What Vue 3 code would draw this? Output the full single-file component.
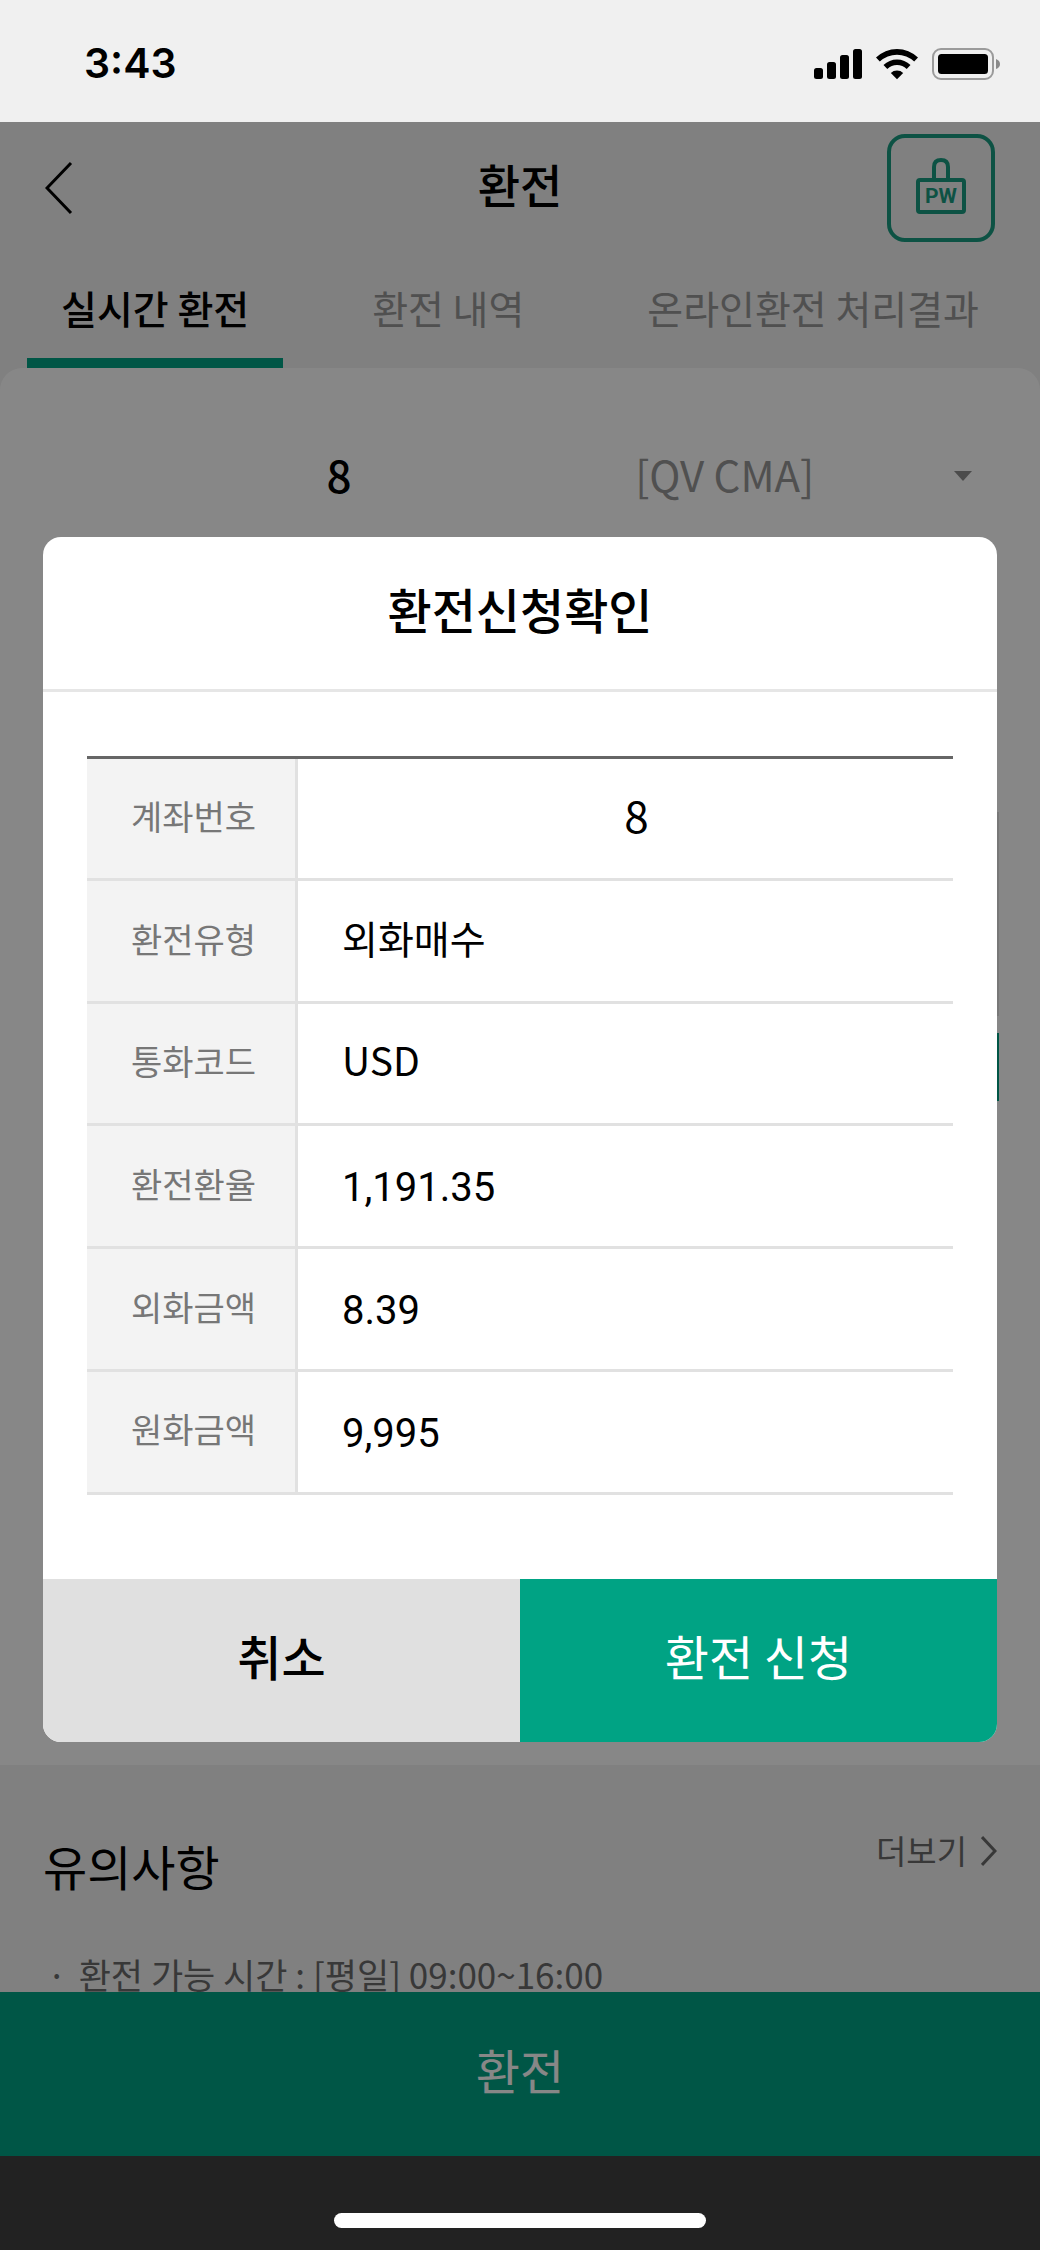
<script setup>
const tabs = ['실시간 환전', '환전 내역', '온라인환전 처리결과']
const rows = [
  { label: '계좌번호', value: '8', kind: 'account-value' },
  { label: '환전유형', value: '외화매수', kind: 'type' },
  { label: '통화코드', value: 'USD', kind: 'code' },
  { label: '환전환율', value: '1,191.35', kind: 'number' },
  { label: '외화금액', value: '8.39', kind: 'number' },
  { label: '원화금액', value: '9,995', kind: 'number' },
]
</script>

<template>
  <div class="phone">
    <div class="status">
      <span class="time">3:43</span>
      <div class="status-icons">
        <svg width="48" height="32" viewBox="0 0 48 32" aria-hidden="true">
          <rect x="0" y="20" width="9" height="11" rx="2.5" />
          <rect x="13" y="14" width="9" height="17" rx="2.5" />
          <rect x="26" y="7" width="9" height="24" rx="2.5" />
          <rect x="39" y="1" width="9" height="30" rx="2.5" />
        </svg>
        <svg width="42" height="32" viewBox="0 0 42 32" aria-hidden="true">
          <path d="M0 9.500a30 30 0 0 1 42 0l-3.800 4a25 25 0 0 0-34.400 0z" />
          <path d="M7.500 17a19.500 19.500 0 0 1 27 0l-3.800 4a14 14 0 0 0-19.400 0z" />
          <path d="M14.800 25a9 9 0 0 1 12.400 0L21 31.200z" />
        </svg>
        <svg width="68" height="32" viewBox="0 0 68 32" aria-hidden="true">
          <rect x="1" y="1" width="60" height="30" rx="8" fill="none" stroke="#9b9b9b" stroke-width="2" />
          <rect x="6" y="6" width="50" height="20" rx="3.500" />
          <path d="M64 11q4 1.500 4 5t-4 5z" fill="#8a8a8a" />
        </svg>
      </div>
    </div>

    <div class="screen">
      <div class="content">
        <header class="top">
          <button class="back" type="button" aria-label="뒤로">
            <svg width="28" height="54" viewBox="0 0 28 54" aria-hidden="true">
              <path d="M26 2L2 27l24 25" fill="none" stroke="#000" stroke-width="3" />
            </svg>
          </button>
          <h1>환전</h1>
          <button class="pw" type="button">
            <svg class="shackle" width="18" height="20" viewBox="0 0 18 20" aria-hidden="true">
              <path d="M2 20V9q0-7 7-7t7 7v11" />
            </svg>
            <span class="pw-text">PW</span>
          </button>
        </header>

        <nav class="tabs">
          <a v-for="(tab, i) in tabs" :key="tab" href="#" :class="{ active: i === 0 }">{{ tab }}</a>
        </nav>

        <section class="sheet">
          <button class="account" type="button" aria-haspopup="listbox">
            <span class="account-no">8</span>
            <span class="account-type">[QV CMA]</span>
            <svg width="18" height="10" viewBox="0 0 18 10" aria-hidden="true">
              <path d="M0 0h18L9 10z" fill="#8f8f8f" />
            </svg>
          </button>
          <div class="panel"></div>
          <div class="accent"></div>
        </section>

        <section class="notice">
          <div class="notice-head">
            <h2>유의사항</h2>
            <a href="#" class="more">
              더보기
              <svg width="16" height="32" viewBox="0 0 16 32" aria-hidden="true">
                <path d="M1 2l13 14L1 30" fill="none" stroke="#6b6b6b" stroke-width="3" />
              </svg>
            </a>
          </div>
          <ul>
            <li><span>·</span>환전 가능 시간 : [평일] 09:00~16:00</li>
          </ul>
        </section>
      </div>

      <button class="submit" type="button">환전</button>

      <div class="overlay">
        <div class="dialog" role="dialog" aria-modal="true" aria-labelledby="dialog-title">
          <h2 id="dialog-title">환전신청확인</h2>
          <div class="dialog-body">
            <table>
              <tbody>
                <tr v-for="row in rows" :key="row.label">
                  <th scope="row">{{ row.label }}</th>
                  <td :class="row.kind">{{ row.value }}</td>
                </tr>
              </tbody>
            </table>
          </div>
          <div class="actions">
            <button type="button" class="cancel">취소</button>
            <button type="button" class="confirm">환전 신청</button>
          </div>
        </div>
      </div>
    </div>

    <div class="home"><span></span></div>
  </div>
</template>

<style>
body {
  margin: 0;
}
</style>

<style scoped>
* {
  box-sizing: border-box;
}
.phone {
  display: flex;
  flex-direction: column;
  height: 100vh;
  font-family: "Noto Sans CJK KR", sans-serif;
  font-size: 39px;
  line-height: 1.2;
  color: #000;
}
button {
  margin: 0;
  padding: 0;
  border: 0;
  background: none;
  font: inherit;
  color: inherit;
}
a {
  color: inherit;
  text-decoration: none;
}
h1,
h2,
ul {
  margin: 0;
  padding: 0;
  font-weight: 400;
  list-style: none;
}
.status {
  display: flex;
  align-items: center;
  justify-content: space-between;
  height: 122px;
  padding: 6px 40px 0 84px;
  background: #f0f0f0;
}
.time {
  font-family: Inter, sans-serif;
  font-size: 41px;
  font-weight: 600;
}
.status-icons {
  display: flex;
  gap: 14px;
}
.screen {
  position: relative;
  display: flex;
  flex: 1;
  flex-direction: column;
  min-height: 0;
  background: #f1f1f1;
}
.content {
  flex: 1;
  min-height: 0;
  overflow: hidden;
}
.top {
  display: grid;
  grid-template-columns: 108px 1fr 108px;
  align-items: center;
  height: 130px;
  padding: 2px 45px 0;
}
.back {
  display: flex;
  justify-self: start;
}
h1 {
  padding-bottom: 8px;
  font-size: 46px;
  font-weight: 500;
  text-align: center;
}
.pw {
  display: flex;
  flex-direction: column;
  align-items: center;
  justify-content: center;
  width: 108px;
  height: 108px;
  padding-bottom: 4px;
  border: 4px solid #1a9c81;
  border-radius: 18px;
  color: #1a9c81;
}
.shackle {
  fill: none;
  stroke: #1a9c81;
  stroke-width: 4;
}
.pw-text {
  width: 50px;
  height: 36px;
  border: 4px solid #1a9c81;
  border-radius: 4px;
  font: 700 21px/28px Roboto, sans-serif;
}
.tabs {
  display: flex;
  justify-content: space-between;
  height: 116px;
  padding: 0 27px;
  color: #979797;
}
.tabs a {
  display: flex;
  align-items: center;
  padding: 4px 34px 0;
  border-bottom: 10px solid transparent;
}
.tabs .active {
  border-color: #00a384;
  color: #000;
  font-weight: 500;
}
.sheet {
  padding: 68px 41px 664px 43px;
  border-radius: 22px 22px 0 0;
  background: #fff;
}
.account {
  display: grid;
  grid-template-columns: 13fr 7fr auto;
  align-items: center;
  width: 100%;
  height: 80px;
  padding-right: 27px;
  text-align: left;
}
.account-no,
.account-type {
  padding-bottom: 4px;
}
.account-no {
  font-size: 44px;
  font-weight: 500;
  text-align: center;
}
.account-type {
  font-size: 42px;
  color: #979797;
}
.panel {
  height: 204px;
  margin-top: 296px;
  border: 2px solid #e3e3e3;
}
.accent {
  height: 68px;
  margin-top: 17px;
  background: #00a384;
}
.notice {
  padding: 60px 43px 0;
}
.notice-head {
  display: flex;
  justify-content: space-between;
  height: 108px;
}
.notice h2 {
  padding-top: 12px;
  font-size: 48px;
}
.more {
  display: flex;
  align-items: center;
  gap: 14px;
  height: 52px;
  font-size: 33px;
  color: #6b6b6b;
}
.notice li {
  display: flex;
  gap: 12px;
  padding: 20px 4px;
  font-size: 35px;
  color: #6b6b6b;
}
.submit {
  height: 164px;
  padding-bottom: 8px;
  background: #00a384;
  font-size: 48px;
  color: #fff;
}
.overlay {
  position: absolute;
  inset: 0;
  display: flex;
  align-items: center;
  padding: 0 43px;
  background: rgba(0, 0, 0, 0.47);
}
.dialog {
  flex: 1;
  overflow: hidden;
  border-radius: 18px;
  background: #fff;
}
.dialog h2 {
  display: flex;
  align-items: center;
  justify-content: center;
  height: 155px;
  padding-bottom: 8px;
  border-bottom: 3px solid #e6e6e6;
  font-size: 48px;
  font-weight: 500;
}
.dialog-body {
  padding: 64px 44px 84px;
}
table {
  width: 100%;
  height: 739px;
  border-top: 3px solid #666;
  border-spacing: 0;
}
tr {
  height: 122px;
}
th,
td {
  border-bottom: 3px solid #e1e1e1;
  text-align: left;
  font-weight: 400;
}
th {
  width: 211px;
  padding: 0 0 4px 44px;
  border-right: 3px solid #e1e1e1;
  background: #f3f3f3;
  font-size: 34px;
  color: #777;
}
td {
  padding: 0 22px 8px 44px;
}
.number {
  padding-top: 4px;
  padding-bottom: 0;
  font-family: Roboto, sans-serif;
  font-size: 40px;
}
.account-value {
  font-size: 44px;
  text-align: center;
}
.actions {
  display: flex;
  height: 163px;
  font-size: 48px;
}
.actions button {
  flex: 1;
  padding-bottom: 8px;
}
.cancel {
  background: #e0e0e0;
  font-weight: 500;
}
.confirm {
  background: #00a384;
  color: #fff;
}
.home {
  display: flex;
  justify-content: center;
  height: 94px;
  padding-top: 57px;
  background: #222;
}
.home span {
  width: 372px;
  height: 15px;
  border-radius: 8px;
  background: #fff;
}
</style>
